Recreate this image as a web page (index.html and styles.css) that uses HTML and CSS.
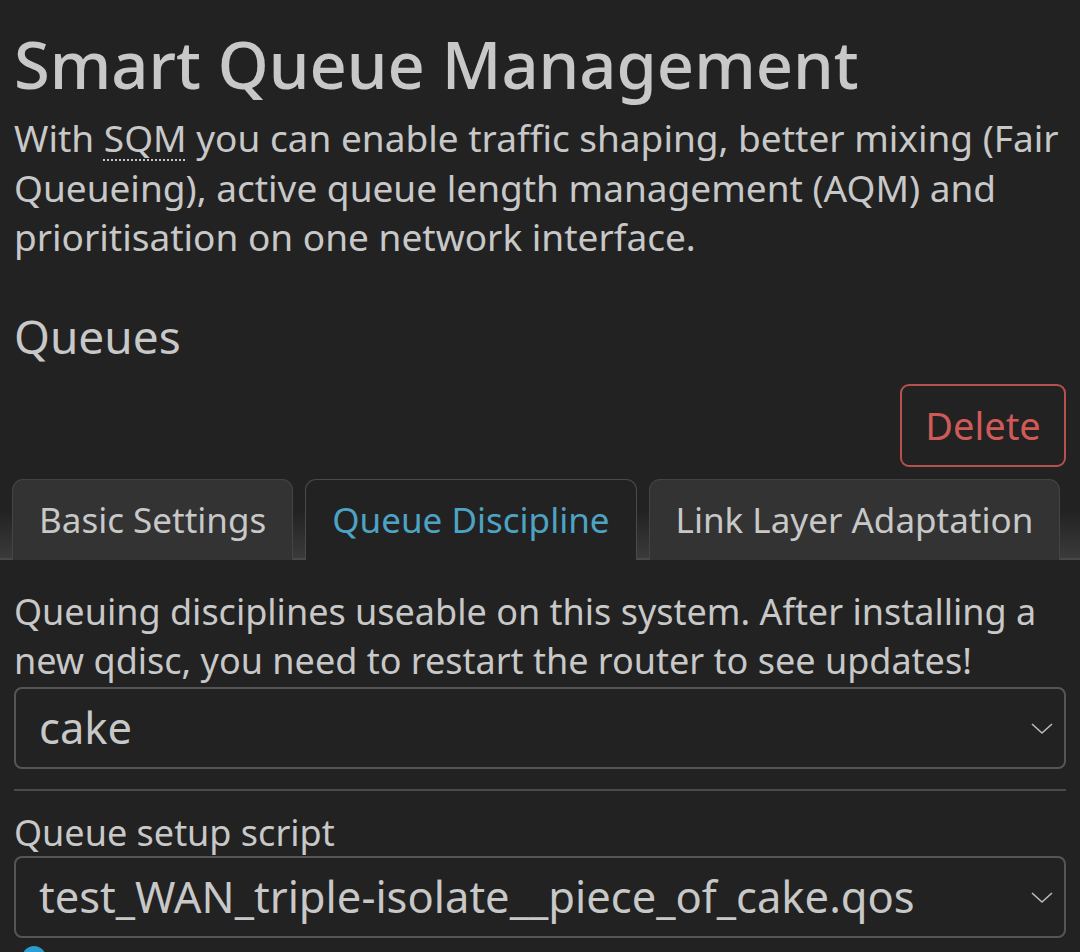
FILE: index.html
```html
<!DOCTYPE html>
<html lang="en">
<head>
  <meta charset="UTF-8" />
  <meta name="viewport" content="width=device-width, initial-scale=1.0" />
  <title>SQM QoS</title>
  <link rel="stylesheet" href="styles.css">
</head>
<body>
  <main class="page">
    <h1>Smart Queue Management</h1>
    <p class="intro">With <abbr title="Smart Queue Management">SQM</abbr> you can enable traffic shaping, better mixing (Fair Queueing), active queue length management (AQM) and prioritisation on one network interface.</p>

    <h2>Queues</h2>
    <div class="actions">
      <button class="btn-delete">Delete</button>
    </div>

    <ul class="tabs">
      <li><a href="#basic">Basic Settings</a></li>
      <li class="active"><a href="#qdisc">Queue Discipline</a></li>
      <li><a href="#lla">Link Layer Adaptation</a></li>
    </ul>

    <section class="tab-body">
      <div class="field">
        <p class="hint">Queuing disciplines useable on this system. After installing a new qdisc, you need to restart the router to see updates!</p>
        <div class="select">
          <span>cake</span>
          <svg viewBox="0 0 24 24" width="24" height="24"><path d="M2 8 L12 17 L22 8" fill="none" stroke="#bbb" stroke-width="1.6"/></svg>
        </div>
      </div>
      <div class="field">
        <label>Queue setup script</label>
        <div class="select">
          <span>test_WAN_triple-isolate__piece_of_cake.qos</span>
          <svg viewBox="0 0 24 24" width="24" height="24"><path d="M2 8 L12 17 L22 8" fill="none" stroke="#bbb" stroke-width="1.6"/></svg>
        </div>
        <span class="help-dot"></span>
      </div>
    </section>
  </main>
</body>
</html>
```

FILE: styles.css
```css
:root{--bg:#222222;--text:#c8c8c8;--tab:#333333;--accent:#4ea3c4;--danger:#d05a58;}
*{box-sizing:border-box;margin:0;padding:0}
body{background:var(--bg);color:var(--text);font-family:'Noto Sans','Open Sans',sans-serif;overflow:hidden;height:952px}
a{text-decoration:none;color:inherit}
.page{padding:22px 14px 0}
h1{font-size:65px;font-weight:500;line-height:84px}
.intro{font-size:37px;line-height:49.5px;margin-top:7px}
abbr{text-decoration:underline dotted;text-underline-offset:7px;text-decoration-thickness:2px}
h2{font-size:46px;font-weight:400;line-height:60px;margin-top:44px}
.actions{display:flex;justify-content:flex-end;margin-top:18px}
.btn-delete{font-family:inherit;font-size:38px;color:var(--danger);background:transparent;border:2px solid #b8504e;border-radius:9px;width:166px;height:83px;cursor:pointer}
.tabs{list-style:none;display:flex;gap:12px;margin:12px -14px 0;padding:0 12px;background:linear-gradient(to bottom,rgba(60,60,60,0) 40%,#3a3a3a 100%);border-bottom:2px solid #484848}
.tabs li{flex:none;white-space:nowrap;background:var(--tab);border:1px solid #444;border-bottom:none;border-radius:11px 11px 0 0;height:81px;display:flex;align-items:center;padding:0 26px;font-size:35px;margin-bottom:-2px}
.tabs li.active{background:var(--bg);color:var(--accent);border-color:#4a4a4a}
.tab-body{padding-top:27px}
.hint{font-size:36px;line-height:49.5px}
.select{margin-top:1px;height:82px;border:2px solid #555;border-radius:8px;display:flex;align-items:center;justify-content:space-between;padding:0 10px 0 23px;font-size:43.5px}
.select span{padding-bottom:2px}
.field{position:relative}
.field + .field{border-top:2px solid #4a4a4a;margin-top:20px;padding-top:20px}
.field label{display:block;font-size:36px;line-height:44px}
.help-dot{position:absolute;left:8px;top:calc(100% + 8px);width:24px;height:24px;border-radius:50%;background:#2a9ccf}
```
